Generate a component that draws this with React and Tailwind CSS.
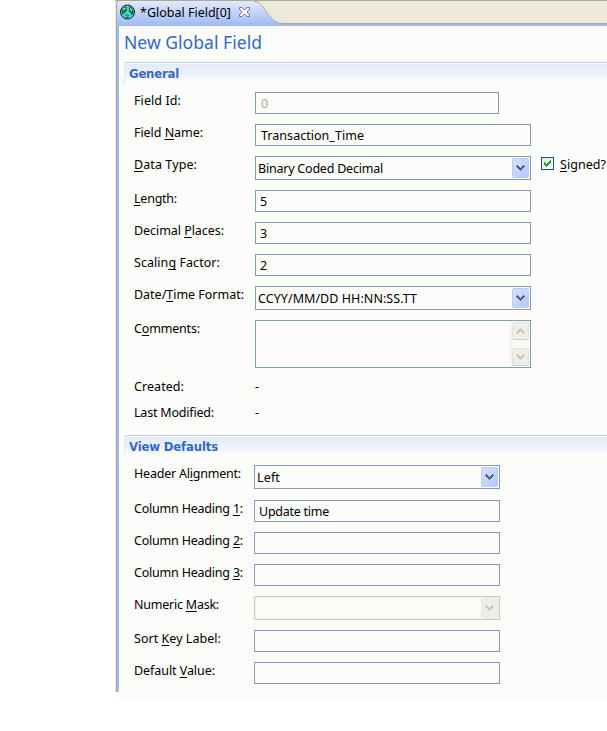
import React, { useLayoutEffect, useRef, useState } from 'react';

// Text tracked so that its run fills the given advance width.
function T({ w, className = '', children }) {
  const ref = useRef(null);
  const [ls, setLs] = useState(0);
  useLayoutEffect(() => {
    const el = ref.current;
    setLs((w - el.getBoundingClientRect().width) / el.textContent.length);
  }, [w]);
  return (
    <span ref={ref} className={`inline-block whitespace-pre ${className}`} style={{ letterSpacing: ls }}>
      {children}
    </span>
  );
}

// Label text with its mnemonic letter (marked by &) underlined.
function Label({ text, w }) {
  const i = text.indexOf('&');
  return (
    <T w={w}>
      {i < 0 ? text : (
        <>
          {text.slice(0, i)}
          <span className="underline decoration-1 underline-offset-2 [text-decoration-skip-ink:none]">{text[i + 1]}</span>
          {text.slice(i + 2)}
        </>
      )}
    </T>
  );
}

function Chevron({ className = '', up }) {
  return (
    <svg width="9" height="6" viewBox="0 0 9 6" shapeRendering="crispEdges" className={`${className} ${up ? 'rotate-180' : ''}`} fill="currentColor">
      <path d="M1 0h1v1h1v1h1v1h1v-1h1v-1h1v-1h1v1h1v1h-1v1h-1v1h-1v1h-1v1h-1v-1h-1v-1h-1v-1h-1v-1h-1v-1h1z" />
    </svg>
  );
}

function Row({ label, w, wide, className = '', children }) {
  return (
    <div className={`flex items-start ${className}`}>
      <div className={`shrink-0 leading-[17px] ${wide ? 'w-[121px]' : 'w-[120px]'}`}>
        <Label text={label} w={w} />
      </div>
      {children}
    </div>
  );
}

function Input({ value, w, className = 'w-[276px] pl-[5px]', text = '' }) {
  return (
    <div className={`h-[22px] shrink-0 border border-[#7f9db9] pt-[2px] leading-[17px] ${className}`}>
      {value && <T w={w} className={text}>{value}</T>}
    </div>
  );
}

function Select({ value, w, className = 'w-[276px]', disabled }) {
  return (
    <div className={`flex h-6 shrink-0 justify-between border p-px pl-[2px] ${disabled ? 'border-[#c9c7ba] shadow-[inset_0_0_0_1px_#f5f4ea]' : 'border-[#7f9db9]'} ${className}`}>
      <div className="pt-[2px] leading-[17px]">{value && <T w={w}>{value}</T>}</div>
      <div className={`flex h-5 w-[17px] items-center justify-center rounded-[2px] border ${disabled ? 'border-[#e8e8df] bg-[#eeeee6] text-[#c9c7ba]' : 'border-[#bccbf0] bg-linear-to-br from-[#d5e0fd] to-[#b4c8f8] text-[#4d6185]'}`}>
        <Chevron />
      </div>
    </div>
  );
}

function ScrollButton({ up }) {
  return (
    <div className="flex h-[18px] w-[17px] items-center justify-center rounded-[2px] border border-[#e4e3d9] border-b-[#cfcdbb] bg-[#efeee8] text-[#c9c7ba]">
      <Chevron up={up} />
    </div>
  );
}

function SectionHeader({ title, w }) {
  return (
    <div className="ml-[5px] h-[23px] rounded-tl-[3px] border-t border-[#b5caf3] bg-linear-to-b from-[#e2eafb] via-[#edf2fc] via-50% to-[#fcfcfa] to-85% pl-[5px] pt-px shadow-[inset_0_1px_0_#ffffff,inset_1px_0_0_#e0e8fa]">
      <T w={w} className="text-[13px] font-bold leading-[20px] text-[#316ac5] font-['DejaVu_Sans_Condensed','DejaVu_Sans',sans-serif]">{title}</T>
    </div>
  );
}

function Globe() {
  return (
    <svg width="16" height="16" viewBox="0 0 16 16">
      <circle cx="8.500" cy="8" r="7" fill="#3fdcec" stroke="#06201c" strokeWidth="1" />
      <path d="M3 5.500l2.500-2.500h2l-.5 2 1 1-2 2.500-1.500.5-1 1.500zM10.500 2.500l2.500 2 1.500 3.500-1.500 3-1.500-2.500-1.500-1 .2-2zM6.500 10.500l3 .5-.5 3-2-.5z" fill="#1f7a2b" stroke="#0d2c12" strokeWidth=".4" />
      <path d="M4.200 5.800l2-1.800M11.300 4.500l1.500 2.500M7.800 11.200v1.500" stroke="#f2e08a" strokeWidth="1.300" />
    </svg>
  );
}

function Tab() {
  return (
    <div className="relative h-[26px] shrink-0 border-t border-[#aca899] bg-[#ece9d8]">
      <svg className="absolute -top-px left-0" width="492" height="26" viewBox="0 0 492 26">
        <defs>
          <linearGradient id="tab" x1="0" y1="0" x2="0" y2="1">
            <stop offset="0" stopColor="#e4ebfc" />
            <stop offset="1" stopColor="#9cb9f6" />
          </linearGradient>
        </defs>
        <path d="M1 26V4Q1 .5 5 .5H136C147 .5 150 12 156 18C159 21 162 23.5 169 23.5H492V26z" fill="url(#tab)" />
        <path d="M168 24H492V26H160z" fill="#9ebaf5" />
        <path d="M1.500 26V4Q1.500 .5 5 .5H136C147 .5 150 12 156 18C159 21 162 23.5 169 23.5H492" fill="none" stroke="#aca899" />
      </svg>
      <div className="relative flex items-start pl-1 pt-[3px]">
        <Globe />
        <T w={91} className="ml-[5px] leading-[17px]">*Global Field[0]</T>
        <svg className="ml-2 mt-[3px]" width="11" height="10" viewBox="0 0 11 10">
          <path d="M.5 .5h2.500l2.500 2.500 2.500-2.500h2.500v1.500l-2.500 3 2.500 3v1.500h-2.500l-2.500-2.500-2.500 2.500h-2.500v-1.500l2.500-3-2.500-3z" fill="#fff" stroke="#737373" />
        </svg>
      </div>
    </div>
  );
}

export default function App() {
  return (
    <div className="h-[731px] w-[607px] overflow-hidden bg-white pl-[115px] font-['Noto_Sans','DejaVu_Sans',sans-serif] text-[12.5px] text-black">
      <div className="flex h-[700px] flex-col bg-[#fcfcfa]">
        <Tab />
        <div className="flex h-[666px] shrink-0">
          <div className="w-px bg-[#ece9d8]" />
          <div className="w-px bg-[#aca899]" />
          <div className="w-[2px] bg-[#9ebaf5]" />
          <div className="min-w-0 flex-1">
            <div className="h-9 pl-[5px] pt-[4px]">
              <T w={138} className="text-[17.5px] leading-6 text-[#316ac5]">New Global Field</T>
            </div>
            <SectionHeader title="General" w={50} />
            <div className="flex flex-col gap-[10px] pl-[15px] pt-[7px]">
              <Row label="Field Id:" w={47} wide><Input value="0" w={8} text="text-[#aca899]" className="w-[244px] pl-[5px]" /></Row>
              <Row label="Field &Name:" w={69} wide><Input value="Transaction_Time" w={103} /></Row>
              <Row label="&Data Type:" w={63} wide>
                <Select value="Binary Coded Decimal" w={125} />
                <div className="ml-[10px] mt-px flex items-start">
                  <div className="flex size-[13px] items-center justify-center border border-[#1c5180] bg-linear-to-br from-[#e3e3dd] to-white">
                    <svg width="7" height="7" viewBox="0 0 7 7" shapeRendering="crispEdges" fill="#21a121">
                      <path d="M0 2h1v1h1v1h1v-1h1v-1h1v-1h1v-1h1v3h-1v1h-1v1h-1v1h-1v1h-1v-1h-1v-1h-1z" />
                    </svg>
                  </div>
                  <div className="-mt-px ml-[6px] leading-[17px]"><Label text="&Signed?" w={46} /></div>
                </div>
              </Row>
              <Row label="&Length:" w={43} wide><Input value="5" w={8} className="w-[276px] pl-1" /></Row>
              <Row label="Decimal &Places:" w={90} wide><Input value="3" w={8} className="w-[276px] pl-1" /></Row>
              <Row label="Scalin&g Factor:" w={86} wide><Input value="2" w={8} className="w-[276px] pl-1" /></Row>
              <Row label="Date/&Time Format:" w={110} wide><Select value="CCYY/MM/DD HH:NN:SS.TT" w={159} /></Row>
              <Row label="C&omments:" w={66} wide>
                <div className="flex h-12 w-[276px] justify-end border border-[#7f9db9] p-px">
                  <div className="flex w-[19px] flex-col justify-between border-l border-[#eeede5] bg-[#f8f8f4] pl-px">
                    <ScrollButton up />
                    <ScrollButton />
                  </div>
                </div>
              </Row>
              <Row label="Created:" w={50} wide className="h-4 leading-[17px]"><T w={5}>-</T></Row>
              <Row label="Last Modified:" w={80} wide className="h-[13px] leading-[17px]"><T w={5}>-</T></Row>
            </div>
            <div className="h-[18px]" />
            <SectionHeader title="View Defaults" w={89} />
            <div className="flex flex-col gap-[10px] pl-[15px] pt-[7px]">
              <Row label="Header Al&ignment:" w={107}><Select value="Left" w={23} className="w-[246px]" /></Row>
              <div className="h-px -mb-[10px]" />
              <Row label="Column Heading &1:" w={109}><Input value="Update time" w={70} className="w-[246px] pl-1" /></Row>
              <Row label="Column Heading &2:" w={109}><Input className="w-[246px]" /></Row>
              <Row label="Column Heading &3:" w={109}><Input className="w-[246px]" /></Row>
              <Row label="Numeric &Mask:" w={85}><Select disabled className="w-[246px]" /></Row>
              <Row label="Sort &Key Label:" w={87}><Input className="w-[246px]" /></Row>
              <Row label="Default &Value:" w={81}><Input className="w-[246px]" /></Row>
            </div>
          </div>
        </div>
      </div>
    </div>
  );
}
